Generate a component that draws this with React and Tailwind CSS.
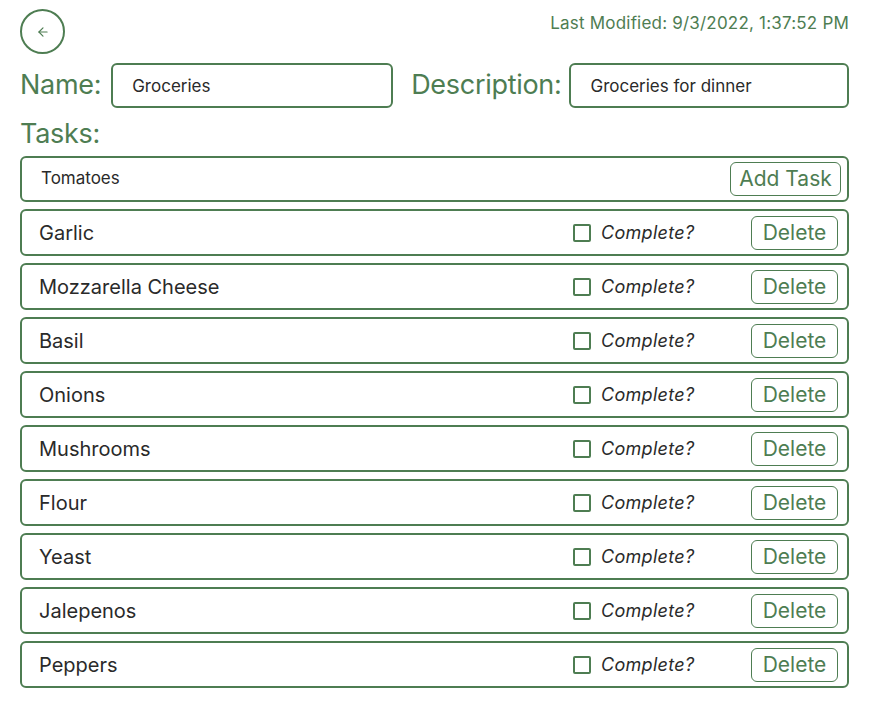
import React, { useState } from 'react';

const initialTasks = [
  'Garlic',
  'Mozzarella Cheese',
  'Basil',
  'Onions',
  'Mushrooms',
  'Flour',
  'Yeast',
  'Jalepenos',
  'Peppers',
];

const TaskRow = ({ name, done, onToggle, onDelete }) => (
  <div className="flex items-center h-[47px] border-2 border-[#4e7d52] rounded-md pl-[17px] pr-[9px]">
    <span className="flex-1 text-[20px] text-[#2a2a2a]">{name}</span>
    <label className="flex items-center gap-[10px] mr-[55px]">
      <input type="checkbox" checked={done} onChange={onToggle} className="hidden" />
      <span className="w-[18px] h-[18px] border-2 border-[#4e7d52] rounded-[2px]" />
      <span className="italic text-[18px] text-[#2a2a2a] w-[95px] tracking-[0.3px]">Complete?</span>
    </label>
    <button
      onClick={onDelete}
      className="h-[34px] w-[87px] border border-[#4e7d52] rounded-md text-[21px] text-[#4e7d52]"
    >
      Delete
    </button>
  </div>
);

const App = () => {
  const [name, setName] = useState('Groceries');
  const [description, setDescription] = useState('Groceries for dinner');
  const [newTask, setNewTask] = useState('Tomatoes');
  const [tasks, setTasks] = useState(initialTasks.map((t) => ({ name: t, done: false })));

  const addTask = () => {
    if (!newTask) return;
    setTasks([...tasks, { name: newTask, done: false }]);
    setNewTask('');
  };

  return (
    <div className="w-[878px] pl-[20px] pr-[29px] pt-[9px] font-['Inter',sans-serif] bg-white">
      {/* header */}
      <div className="flex justify-between items-start">
        <button className="w-[45px] h-[45px] rounded-full border-2 border-[#4e7d52] flex items-center justify-center text-[#4e7d52]">
          <svg width="14" height="14" viewBox="0 0 24 24" fill="none" stroke="currentColor" strokeWidth="2" strokeLinecap="round" strokeLinejoin="round">
            <path d="M19 12H5" />
            <path d="M12 19l-7-7 7-7" />
          </svg>
        </button>
        <span className="text-[17px] text-[#4e7d52] mt-[2px] tracking-[0.2px]">Last Modified: 9/3/2022, 1:37:52 PM</span>
      </div>

      {/* name / description */}
      <div className="flex items-center mt-[9px]">
        <span className="text-[27px] text-[#4e7d52] mr-[10px] tracking-[-0.3px]">Name:</span>
        <input
          value={name}
          onChange={(e) => setName(e.target.value)}
          className="w-[282px] h-[45px] border-2 border-[#4e7d52] rounded-md px-[19px] text-[17px] text-[#2a2a2a] outline-none"
        />
        <span className="text-[27px] text-[#4e7d52] ml-[18px] mr-[8px] tracking-[-0.3px]">Description:</span>
        <input
          value={description}
          onChange={(e) => setDescription(e.target.value)}
          className="flex-1 min-w-0 h-[45px] border-2 border-[#4e7d52] rounded-md px-[19px] text-[17px] text-[#2a2a2a] outline-none"
        />
      </div>

      <div className="text-[27px] text-[#4e7d52] mt-[6px] leading-[40px] tracking-[-0.3px]">Tasks:</div>

      <div className="flex flex-col gap-[7px] mt-[2px]">
        <div className="flex items-center h-[46px] border-2 border-[#4e7d52] rounded-md pl-[19px] pr-[6px]">
          <input
            value={newTask}
            onChange={(e) => setNewTask(e.target.value)}
            className="flex-1 min-w-0 text-[17px] text-[#2a2a2a] outline-none"
          />
          <button
            onClick={addTask}
            className="h-[34px] w-[111px] border border-[#4e7d52] rounded-md text-[21px] text-[#4e7d52]"
          >
            Add Task
          </button>
        </div>
        {tasks.map((t, i) => (
          <TaskRow
            key={i}
            name={t.name}
            done={t.done}
            onToggle={() =>
              setTasks(tasks.map((x, j) => (j === i ? { ...x, done: !x.done } : x)))
            }
            onDelete={() => setTasks(tasks.filter((_, j) => j !== i))}
          />
        ))}
      </div>
    </div>
  );
};

export default App;
